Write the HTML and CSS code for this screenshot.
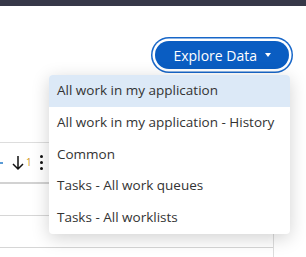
FILE: index.html
```html
<!DOCTYPE html>
<html>
<head>
	<title>Explore Data</title>
    <link rel="stylesheet" href="styles.css">
</head>
<body>
	<div class="topbar"></div>
	<div class="page">
		<div class="toolbar">
			<button type="button" class="explore-btn">Explore Data <span class="caret"></span></button>
		</div>

		<div class="grid">
			<div class="grid-head">
				<span class="link-stub"></span>
				<span class="sort">
					<svg width="12" height="16" viewBox="0 0 12 16"><path d="M6 1v13M1 9l5 5 5-5" fill="none" stroke="#111" stroke-width="1.5"/></svg>
					<sup class="sort-num">1</sup>
				</span>
				<span class="kebab"><i></i><i></i><i></i></span>
			</div>
			<div class="grid-row"></div>
			<div class="grid-row"></div>
			<div class="grid-row last"></div>
		</div>

		<ul class="menu">
			<li class="active">All work in my application</li>
			<li>All work in my application - History</li>
			<li>Common</li>
			<li>Tasks - All work queues</li>
			<li>Tasks - All worklists</li>
		</ul>
	</div>
</body>
</html>
```

FILE: styles.css
```css
html, body {
    height: 257px;
    overflow: hidden;
}

body {
    margin: 0;
    font-family: "Open Sans", "Noto Sans", sans-serif;
    background: #fff;
}

.topbar {
    height: 6px;
    background-color: #363848;
}

.page {
    position: relative;
}

.toolbar {
    display: flex;
    justify-content: flex-end;
    padding: 35px 17px 0 0;
}

.explore-btn {
    display: flex;
    align-items: center;
    gap: 8px;
    height: 28px;
    padding: 0 18px;
    border: 0;
    border-radius: 14px;
    background-color: #0a5dc2;
    color: #fff;
    font-family: inherit;
    font-size: 14px;
    box-shadow: 0 0 0 2.5px #fff, 0 0 0 4px #1766c8;
}

.caret {
    width: 0;
    height: 0;
    border-left: 3.5px solid transparent;
    border-right: 3.5px solid transparent;
    border-top: 4px solid #fff;
}

.grid {
    margin-top: 73px;
    width: 273px;
    border-right: 1px solid #ddd;
}

.grid-head {
    display: flex;
    align-items: center;
    height: 39px;
    border-top: 1px solid #ddd;
    border-bottom: 2px solid #d2d2d2;
}

.link-stub {
    width: 3px;
    height: 2px;
    background: #5b9bd5;
    margin-right: 9px;
}

.sort {
    display: flex;
    align-items: flex-start;
}

.sort-num {
    font-size: 10px;
    color: #d0961a;
    line-height: 1;
    margin: 2px 0 0 2px;
}

.kebab {
    display: flex;
    flex-direction: column;
    gap: 3px;
    margin-left: 8px;
}

.kebab i {
    width: 3px;
    height: 3px;
    border-radius: 50%;
    background: #111;
}

.grid-row {
    height: 31px;
    border-bottom: 1px solid #d6d6d6;
}

.grid-row.last {
    height: 12px;
    border-bottom: 0;
}

.menu {
    position: absolute;
    top: 69px;
    left: 49px;
    width: 241px;
    margin: 0;
    padding: 0;
    list-style: none;
    background: #fff;
    border-radius: 4px;
    box-shadow: 0 4px 18px rgba(0, 0, 0, 0.18);
    overflow: hidden;
}

.menu li {
    height: 31.75px;
    line-height: 31.75px;
    padding: 0 8px;
    font-size: 13.5px;
    color: #333;
    white-space: nowrap;
}

.menu li.active {
    background-color: #dce9f7;
}
```
